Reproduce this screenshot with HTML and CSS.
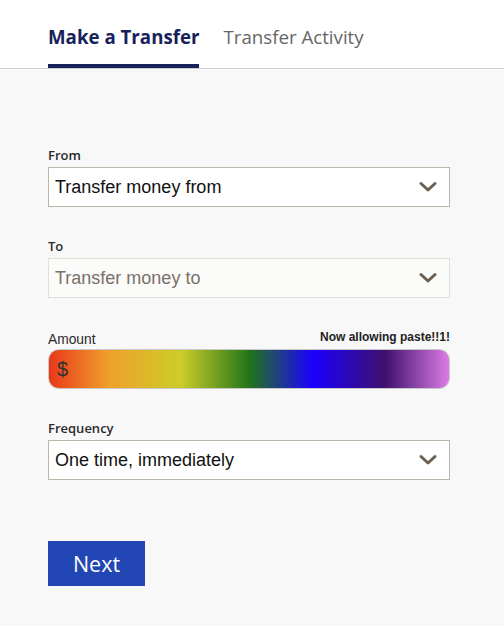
FILE: index.html
```html
<!DOCTYPE html>
<html>
<head>
<meta charset="utf-8">
<link rel="stylesheet" href="styles.css">
</head>
<body>
<header class="tabs">
  <div class="tab active">Make a Transfer</div>
  <div class="tab">Transfer Activity</div>
</header>
<main class="form">
  <div class="field">
    <label class="label">From</label>
    <div class="select">
      <span>Transfer money from</span>
      <svg class="chev" width="18" height="12" viewBox="0 0 18 12"><path d="M2 2.5 L9 9 L16 2.5" fill="none" stroke="#6b5f52" stroke-width="3" stroke-linecap="round" stroke-linejoin="round"/></svg>
    </div>
  </div>
  <div class="field">
    <label class="label">To</label>
    <div class="select disabled">
      <span>Transfer money to</span>
      <svg class="chev" width="18" height="12" viewBox="0 0 18 12"><path d="M2 2.5 L9 9 L16 2.5" fill="none" stroke="#6b5f52" stroke-width="3" stroke-linecap="round" stroke-linejoin="round"/></svg>
    </div>
  </div>
  <div class="field">
    <div class="label-row">
      <label class="label amount-label">Amount</label>
      <span class="paste">Now allowing paste!!1!</span>
    </div>
    <div class="amount">$</div>
  </div>
  <div class="field">
    <label class="label">Frequency</label>
    <div class="select">
      <span>One time, immediately</span>
      <svg class="chev" width="18" height="12" viewBox="0 0 18 12"><path d="M2 2.5 L9 9 L16 2.5" fill="none" stroke="#6b5f52" stroke-width="3" stroke-linecap="round" stroke-linejoin="round"/></svg>
    </div>
  </div>
  <button class="next">Next</button>
</main>
</body>
</html>
```

FILE: styles.css
```css
html, body {
  margin: 0;
  padding: 0;
  background: #f8f8f8;
  height: 100%;
}
body {
  font-family: "Open Sans", "Noto Sans", sans-serif;
}
.tabs {
  background: #fff;
  height: 68px;
  border-bottom: 1px solid #cfcfcf;
  display: flex;
  gap: 24px;
  padding-left: 48px;
  box-sizing: content-box;
}
.tab {
  font-size: 18.7px;
  color: #666;
  padding-top: 23px;
  line-height: 28px;
  height: 40px;
  box-sizing: border-box;
}
.tab.active {
  color: #17225a;
  font-weight: 700;
  height: 68px;
  border-bottom: 4px solid #17225a;
}
.form {
  display: flex;
  flex-direction: column;
  padding: 77px 54px 0 48px;
}
.field {
  display: flex;
  flex-direction: column;
  margin-bottom: 30px;
}
.label {
  font-size: 13px;
  font-weight: 600;
  color: #2a2a2a;
  line-height: 18px;
  height: 18px;
  margin-bottom: 3px;
}
.label-row {
  display: flex;
  justify-content: space-between;
  align-items: flex-end;
}
.amount-label {
  font-family: "Liberation Sans", Arial, sans-serif;
  font-weight: 400;
  font-size: 13.8px;
  line-height: 20px;
  margin-bottom: 1px;
}
.paste {
  font-family: "Liberation Sans", Arial, sans-serif;
  font-weight: 700;
  font-size: 12px;
  color: #222;
  line-height: 18px;
  margin-bottom: 3px;
}
.select {
  height: 40px;
  box-sizing: border-box;
  border: 1px solid #bdb5aa;
  background: #fff;
  display: flex;
  align-items: center;
  justify-content: space-between;
  padding: 0 12px 0 6px;
  font-family: "Liberation Sans", Arial, sans-serif;
  font-size: 18px;
  color: #111;
}
.select.disabled {
  background: #fbfbf9;
  border-color: #e2ded8;
  color: #7a7068;
}
.amount {
  height: 40px;
  box-sizing: border-box;
  border: 1px solid #c8c8c8;
  border-radius: 11px;
  padding-left: 8px;
  display: flex;
  align-items: center;
  font-family: "Liberation Sans", Arial, sans-serif;
  font-size: 20px;
  color: #333;
  background: linear-gradient(to right,
    #e8381a 0%,
    #f0a02a 15%,
    #cccd2a 33%,
    #237518 50%,
    #1b00ff 66%,
    #3e106e 84%,
    #dc7ce4 100%);
}
.next {
  margin-top: 31px;
  align-self: flex-start;
  width: 97px;
  height: 45px;
  border: none;
  background: #2346b5;
  color: #fff;
  font-family: "Open Sans", "Noto Sans", sans-serif;
  font-size: 21.5px;
  padding: 0;
}
```
